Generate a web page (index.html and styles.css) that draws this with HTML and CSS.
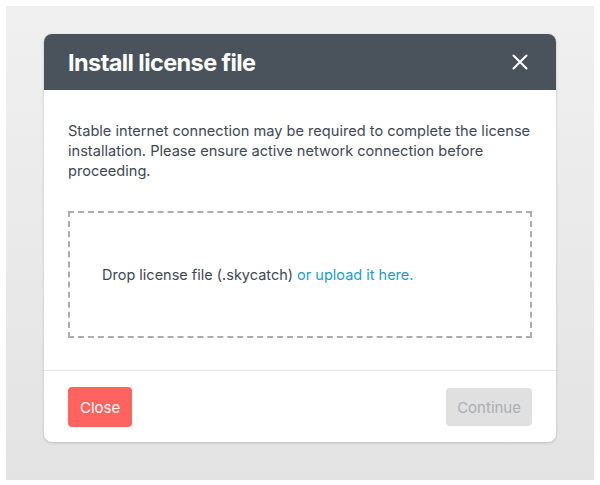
FILE: index.html
```html
<!DOCTYPE html>
<html>
<head>
    <link rel="stylesheet" href="styles.css">
</head>
<body>
    <div class="backdrop">
        <div class="modal">
            <div class="modal-header">
                <h3>Install license file</h3>
                <button class="close-x" aria-label="Close">
                    <svg width="16" height="16" viewBox="0 0 16 16">
                        <path d="M1.5 1.5 L14.5 14.5 M14.5 1.5 L1.5 14.5" stroke="#fff" stroke-width="2" stroke-linecap="round" fill="none"/>
                    </svg>
                </button>
            </div>
            <div class="modal-body">
                <p class="notice">Stable internet connection may be required to complete the license installation. Please ensure active network connection before proceeding.</p>
                <div class="dropzone">
                    <span>Drop license file (.skycatch) <a href="#" class="upload-link">or upload it here.</a></span>
                </div>
            </div>
            <div class="modal-footer">
                <button class="btn btn-close">Close</button>
                <button class="btn btn-continue" disabled>Continue</button>
            </div>
        </div>
    </div>
</body>
</html>
```

FILE: styles.css
```css
body {
    font-family: Inter, "Liberation Sans", sans-serif;
    background: #fff;
    color: #3f4753;
    margin: 0;
    padding: 6px;
    width: 600px;
    height: 485px;
    box-sizing: border-box;
    overflow: hidden;
}
.backdrop {
    height: 474px;
    background: linear-gradient(#f0f0f0, #e3e3e3);
    padding: 28px 38px 0;
    box-sizing: border-box;
}
.modal {
    background: #fff;
    border-radius: 8px;
    box-shadow: 0 1px 3px rgba(0, 0, 0, 0.18);
    overflow: hidden;
}
.modal-header {
    background: #4a525b;
    height: 56px;
    display: flex;
    align-items: center;
    justify-content: space-between;
    padding: 0 28px 0 24px;
}
.modal-header h3 {
    margin: 0;
    color: #fff;
    font-size: 23.5px;
    font-weight: 700;
    letter-spacing: -0.025em;
}
.close-x {
    background: none;
    border: 0;
    padding: 0;
    display: flex;
    cursor: pointer;
}
.modal-body {
    padding: 31px 24px 32px;
    border-bottom: 1px solid #e8e8e8;
}
.notice {
    margin: 0 0 30px;
    font-size: 14.6px;
    line-height: 20px;
    color: #3f4753;
}
.dropzone {
    height: 127px;
    border: 2px dashed #ababb0;
    box-sizing: border-box;
    display: flex;
    align-items: center;
    padding: 0 32px;
    font-size: 14.5px;
}
.upload-link {
    color: #1b9bd4;
    text-decoration: none;
}
.modal-footer {
    display: flex;
    justify-content: space-between;
    align-items: center;
    padding: 16px 24px 15px;
}
.btn {
    font-family: inherit;
    font-size: 15px;
    border: 0;
    border-radius: 4px;
    padding: 0 12px;
}
.btn-close {
    background: #ff6360;
    color: #fff;
    height: 40px;
}
.btn-continue {
    background: #e0e0e0;
    color: #a9aeb4;
    height: 38px;
    padding: 0 11px;
}
```
